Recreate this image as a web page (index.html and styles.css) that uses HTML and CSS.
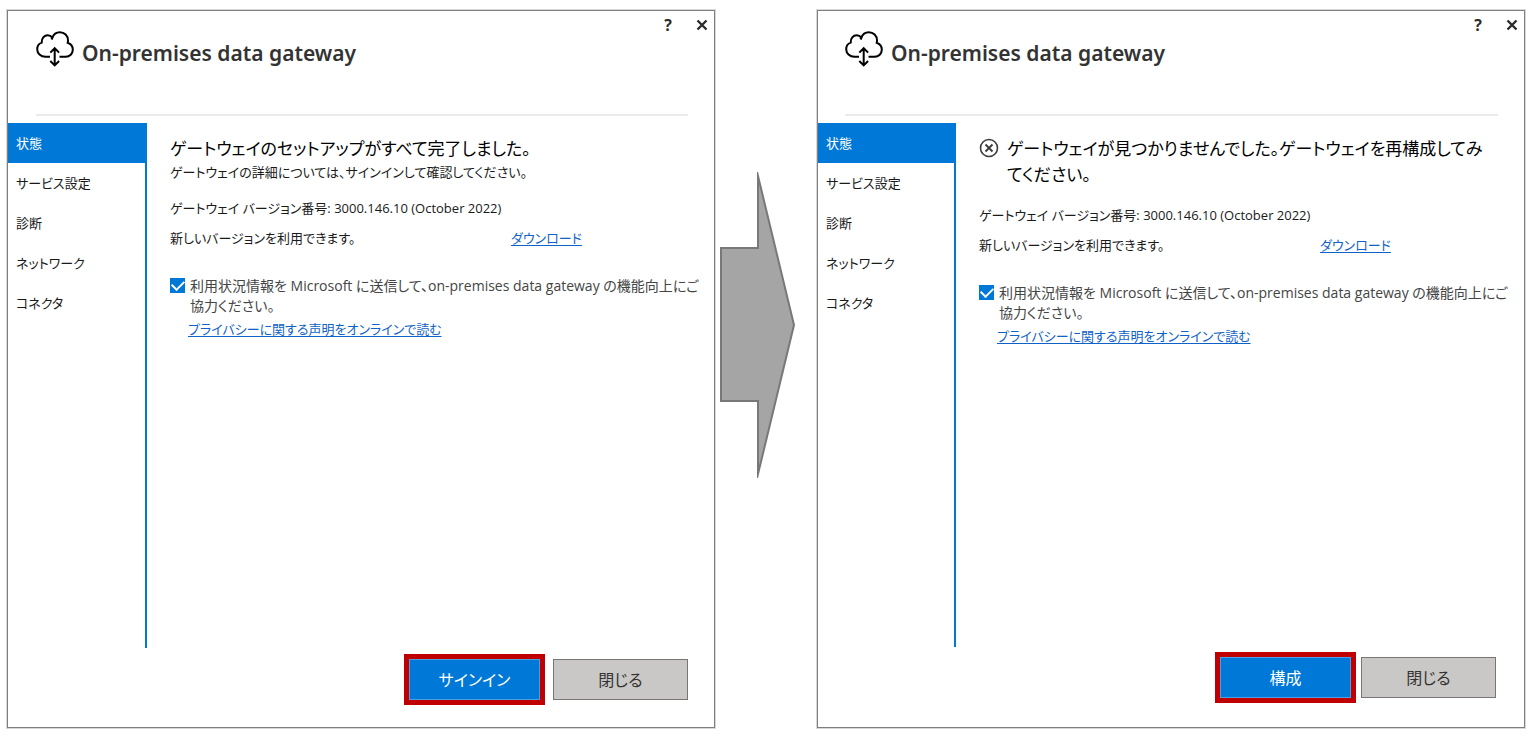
FILE: index.html
```html
<!DOCTYPE html>
<html lang="ja">
<head>
<meta charset="utf-8">
<meta name="viewport" content="width=device-width, initial-scale=1">
<title>On-premises data gateway</title>
<link rel="stylesheet" href="styles.css">
</head>
<body>
<svg class="defs" aria-hidden="true">
  <symbol id="cloud" viewBox="0 0 38 36">
    <g fill="none" stroke="#000" stroke-width="2">
      <path d="M14 25.800H9.500C4.600 25.800 1.200 22.300 1.200 18.200C1.200 15 3.200 12.500 5.700 11.600C5.300 7.300 8.300 4.300 11.700 4.300C13.500 4.300 15.200 5.100 16.300 6.600C17.500 3.300 20.400 1.200 23.800 1.200C28.500 1.200 32 4.800 32 9.400C32 10.200 31.900 11 31.700 11.800C34.800 12.800 36.800 15.500 36.800 18.700C36.800 22.700 33.700 25.800 29.700 25.800H23.500"/>
      <path d="M15.500 8.500L16.600 6"/>
      <path d="M18.700 18V34M14.300 21.600L18.700 17.200L23.100 21.600M14.300 30L18.700 34.400L23.100 30"/>
    </g>
  </symbol>
</svg>
<main class="stage">
  <section class="dialog" aria-label="On-premises data gateway">
    <div class="window-buttons">
      <button class="window-button" type="button" aria-label="ヘルプ">?</button>
      <button class="window-button" type="button" aria-label="閉じる"><svg width="12" height="12" viewBox="0 0 12 12" aria-hidden="true"><path d="M1.500 1.500L10.500 10.500M10.500 1.500L1.500 10.500" stroke="#2b2b2b" stroke-width="2.400"/></svg></button>
    </div>
    <header class="header">
      <svg class="logo" aria-hidden="true"><use href="#cloud"/></svg>
      <h1 class="title">On-premises data gateway</h1>
    </header>
    <div class="body">
      <nav class="nav">
        <a class="nav-item nav-item-active" href="#">状態</a>
        <a class="nav-item" href="#">サービス設定</a>
        <a class="nav-item" href="#">診断</a>
        <a class="nav-item" href="#">ネットワーク</a>
        <a class="nav-item" href="#">コネクタ</a>
      </nav>
      <div class="content">
        <h2 class="status">ゲートウェイのセットアップがすべて完了しました。</h2>
        <p class="detail">ゲートウェイの詳細については、サインインして確認してください。</p>
        <p class="version">ゲートウェイ バージョン番号: 3000.146.10 (October 2022)</p>
        <div class="update"><span class="update-text">新しいバージョンを利用できます。</span><a class="link" href="#">ダウンロード</a></div>
        <div class="consent">
          <input class="check" type="checkbox" id="usage-1" checked>
          <label class="consent-label" for="usage-1">利用状況情報を Microsoft に送信して、on-premises data gateway の機能向上にご<br>協力ください。</label>
        </div>
        <a class="link privacy" href="#">プライバシーに関する声明をオンラインで読む</a>
      </div>
    </div>
    <footer class="footer">
      <span class="highlight"><button class="button button-primary" type="button">サインイン</button></span>
      <button class="button" type="button">閉じる</button>
    </footer>
  </section>

  <svg class="arrow" viewBox="0 0 76 306" aria-hidden="true"><path d="M1 76H38V4L74 153L38 302V229H1Z" fill="#a5a5a5" stroke="#787878" stroke-width="2" stroke-miterlimit="12"/></svg>

  <section class="dialog dialog-error" aria-label="On-premises data gateway">
    <div class="window-buttons">
      <button class="window-button" type="button" aria-label="ヘルプ">?</button>
      <button class="window-button" type="button" aria-label="閉じる"><svg width="12" height="12" viewBox="0 0 12 12" aria-hidden="true"><path d="M1.500 1.500L10.500 10.500M10.500 1.500L1.500 10.500" stroke="#2b2b2b" stroke-width="2.400"/></svg></button>
    </div>
    <header class="header">
      <svg class="logo" aria-hidden="true"><use href="#cloud"/></svg>
      <h1 class="title">On-premises data gateway</h1>
    </header>
    <div class="body">
      <nav class="nav">
        <a class="nav-item nav-item-active" href="#">状態</a>
        <a class="nav-item" href="#">サービス設定</a>
        <a class="nav-item" href="#">診断</a>
        <a class="nav-item" href="#">ネットワーク</a>
        <a class="nav-item" href="#">コネクタ</a>
      </nav>
      <div class="content">
        <div class="status-row">
          <svg class="status-icon" viewBox="0 0 20 20" aria-hidden="true"><g fill="none" stroke="#3c3c3c"><circle cx="10" cy="10" r="8.500" stroke-width="1.600"/><path d="M6.500 6.500L13.500 13.500M13.500 6.500L6.500 13.500" stroke-width="1.900"/></g></svg>
          <h2 class="status">ゲートウェイが見つかりませんでした。ゲートウェイを再構成してみ<br>てください。</h2>
        </div>
        <p class="version">ゲートウェイ バージョン番号: 3000.146.10 (October 2022)</p>
        <div class="update"><span class="update-text">新しいバージョンを利用できます。</span><a class="link" href="#">ダウンロード</a></div>
        <div class="consent">
          <input class="check" type="checkbox" id="usage-2" checked>
          <label class="consent-label" for="usage-2">利用状況情報を Microsoft に送信して、on-premises data gateway の機能向上にご<br>協力ください。</label>
        </div>
        <a class="link privacy" href="#">プライバシーに関する声明をオンラインで読む</a>
      </div>
    </div>
    <footer class="footer">
      <span class="highlight"><button class="button button-primary" type="button">構成</button></span>
      <button class="button" type="button">閉じる</button>
    </footer>
  </section>
</main>
</body>
</html>
```

FILE: styles.css
```css
* {
  box-sizing: border-box;
}

body {
  margin: 0;
  background: #fff;
  color: #1a1a1a;
  font-family: "Open Sans", "Noto Sans CJK JP", sans-serif;
  font-size: 13px;
  line-height: 20px;
  font-feature-settings: "palt";
}

button {
  font: inherit;
  font-feature-settings: inherit;
}

h1,
h2,
p {
  margin: 0;
}

.defs {
  position: absolute;
  width: 0;
  height: 0;
}

.stage {
  display: flex;
  min-height: 100vh;
  padding: 10px 13px 10px 7px;
}

.dialog {
  display: flex;
  flex: 1 1 0;
  flex-direction: column;
  min-width: 0;
  border: 1px solid #7f7f7f;
  box-shadow: 0 0 0 1px #d8d8d8;
}

.window-buttons {
  display: flex;
  justify-content: flex-end;
  gap: 14px;
  height: 20px;
  padding: 4px 2px 0 0;
}

.window-button {
  display: grid;
  place-items: center;
  width: 20px;
  height: 20px;
  padding: 0;
  border: 0;
  background: none;
  color: #2b2b2b;
  font-size: 16px;
  font-weight: 700;
}

.header {
  display: flex;
  gap: 8px;
  height: 85px;
  margin: 0 26px 0 28px;
  border-bottom: 2px solid #ebebeb;
}

.logo {
  width: 38px;
  height: 36px;
}

.title {
  padding-top: 7px;
  color: #333;
  font-family: "Noto Sans", "Open Sans", sans-serif;
  font-size: 21px;
  font-weight: 600;
  line-height: 30px;
}

.body {
  display: flex;
  flex: 1;
  margin-top: 7px;
}

.nav {
  flex: none;
  width: 139px;
  border-right: 2px solid #0078d7;
}

.nav-item {
  display: block;
  height: 40px;
  padding-left: 8px;
  color: #1a1a1a;
  line-height: 40px;
  text-decoration: none;
}

.nav-item-active {
  margin-right: -2px;
  background: #0078d7;
  color: #fff;
}

.content {
  flex: 1;
  padding: 13px 0 0 23px;
  white-space: nowrap;
}

.status {
  color: #000;
  font-size: 17px;
  font-weight: 400;
  line-height: 26px;
}

.status-row {
  display: flex;
  gap: 8px;
}

.status-icon {
  flex: none;
  width: 20px;
  height: 20px;
  margin-top: 2px;
}

.version {
  margin-top: 16px;
}

.update {
  display: flex;
  margin-top: 10px;
}

.update-text {
  width: 341px;
}

.link {
  color: #0f62c8;
  text-decoration: underline;
  text-underline-offset: 2px;
}

.consent {
  display: flex;
  align-items: flex-start;
  gap: 5px;
  margin-top: 28px;
}

.check {
  display: grid;
  flex: none;
  place-items: center;
  width: 15px;
  height: 15px;
  margin: 2px 0 0;
  appearance: none;
  background: #fff;
  border: 1px solid #0078d7;
}

.check:checked {
  background: #0078d7;
}

.check:checked::after {
  width: 10px;
  height: 6px;
  border: solid #fff;
  border-width: 0 0 2px 2px;
  transform: translateY(-2px) rotate(-45deg);
  content: "";
}

.consent-label {
  color: #444;
  font-size: 14px;
}

.privacy {
  display: inline-block;
  margin: 3px 0 0 18px;
}

.footer {
  display: flex;
  align-items: center;
  justify-content: flex-end;
  gap: 8px;
  padding: 6px 26px 22px 0;
}

.highlight {
  display: flex;
  border: 5px solid #c00000;
}

.button {
  width: 135px;
  height: 41px;
  padding: 0;
  border: 1px solid #7a7574;
  background: #cac8c6;
  color: #333;
  font-size: 16px;
}

.button-primary {
  width: 131px;
  border: 1px solid #4ba0e4;
  background: #0078d7;
  color: #fff;
}

.dialog-error .header {
  margin-left: 27px;
}

.dialog-error .nav {
  width: 138px;
}

.dialog-error .version {
  margin-top: 17px;
}

.dialog-error .footer {
  gap: 5px;
  padding: 5px 28px 24px 0;
}

.arrow {
  flex: none;
  align-self: flex-start;
  width: 76px;
  height: 306px;
  margin: 162px 21px 0 5px;
}
```
